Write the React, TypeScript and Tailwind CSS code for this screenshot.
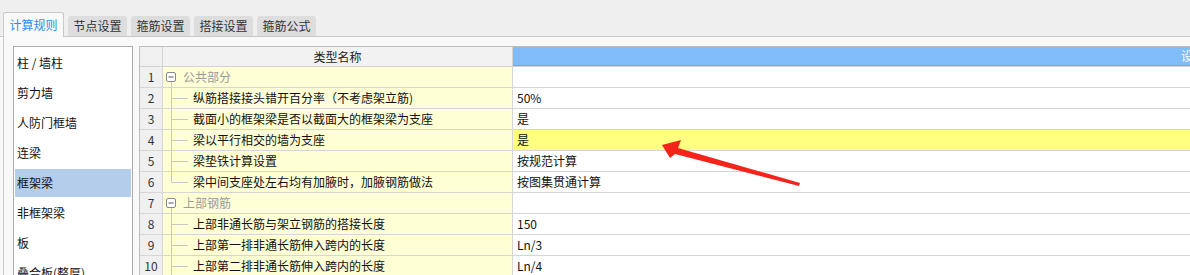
import React from "react";

type Row = {
  no: number;
  name: string;
  value?: string;
  group?: boolean;
  last?: boolean;
  hl?: boolean;
};

const rows: Row[] = [
  { no: 1, name: "公共部分", group: true },
  { no: 2, name: "纵筋搭接接头错开百分率（不考虑架立筋)", value: "50%" },
  { no: 3, name: "截面小的框架梁是否以截面大的框架梁为支座", value: "是" },
  { no: 4, name: "梁以平行相交的墙为支座", value: "是", hl: true },
  { no: 5, name: "梁垫铁计算设置", value: "按规范计算" },
  { no: 6, name: "梁中间支座处左右均有加腋时，加腋钢筋做法", value: "按图集贯通计算", last: true },
  { no: 7, name: "上部钢筋", group: true },
  { no: 8, name: "上部非通长筋与架立钢筋的搭接长度", value: "150" },
  { no: 9, name: "上部第一排非通长筋伸入跨内的长度", value: "Ln/3" },
  { no: 10, name: "上部第二排非通长筋伸入跨内的长度", value: "Ln/4" },
];

const tabs = ["节点设置", "箍筋设置", "搭接设置", "箍筋公式"];
const items = ["柱 / 墙柱", "剪力墙", "人防门框墙", "连梁", "框架梁", "非框架梁", "板", "叠合板(整厚)"];

function TreeMark({ row }: { row: Row }) {
  if (row.group) {
    return (
      <svg width="20" height="20" className="shrink-0">
        <rect x="3.5" y="5.5" width="9" height="9" rx="1.5" fill="white" stroke="#8a8a8a" />
        <line x1="5.5" y1="10" x2="10.5" y2="10" stroke="#555" />
        <line x1="8.5" y1="15" x2="8.5" y2="20" stroke="#c8c8c8" />
      </svg>
    );
  }
  return (
    <svg width="30" height="20" className="shrink-0">
      <line x1="8.5" y1="0" x2="8.5" y2={row.last ? 10.5 : 20} stroke="#c8c8c8" />
      <line x1="8.5" y1="10.5" x2="25" y2="10.5" stroke="#c8c8c8" />
    </svg>
  );
}

export default function App() {
  return (
    <div className="relative h-[275px] w-[1190px] overflow-hidden bg-[#f9f9f9] font-['Noto_Sans_CJK_SC',sans-serif] text-[12px] text-[#111]">
      <div className="flex h-[37px] items-end gap-[4px] border-b border-[#c9c9c9] bg-[#efefef] pl-[3px]">
        <div className="mb-[-1px] flex h-[25px] w-[61px] items-center justify-center rounded-t-[3px] border border-b-0 border-[#c9c9c9] bg-[#f9f9f9] text-[#2f8cf0]">
          计算规则
        </div>
        {tabs.map((t) => (
          <div
            key={t}
            className="flex h-[20px] w-[59px] items-center justify-center rounded-t-[3px] bg-[#dddddd] text-[#333]"
          >
            {t}
          </div>
        ))}
      </div>

      <div className="ml-[3px] flex h-[238px] border-l border-[#c9c9c9] pl-[9px] pt-[9px]">
        <div className="h-[260px] w-[120px] shrink-0 border border-[#ababab] bg-white px-px pt-px">
          {items.map((it, i) => (
            <div key={it} className="h-[30px] py-px">
              <div
                className={`flex h-[28px] items-center pl-[2px] leading-none ${
                  i === 4 ? "bg-[#b3cdea]" : ""
                }`}
              >
                {it}
              </div>
            </div>
          ))}
        </div>

        <div className="ml-[6px] min-w-0 flex-1 overflow-hidden border-l border-t border-[#bdbdbd] bg-white">
          <div className="flex h-[20px] border-b border-[#d3d3d3]">
            <div className="w-[23px] shrink-0 border-r border-[#d3d3d3] bg-[#f0f0f0]" />
            <div className="flex w-[350px] shrink-0 items-center justify-center border-r border-[#d3d3d3] bg-[#f2f2f2] leading-none text-[#222]">
              类型名称
            </div>
            <div className="flex w-[1372px] shrink-0 items-center justify-center border-b border-[#6aa9ea] bg-[#80bdf8] leading-none text-white">
              设置值
            </div>
          </div>

          {rows.map((r) => (
            <div key={r.no} className="flex h-[21px] border-b border-[#d6d6d6]">
              <div className="flex w-[23px] shrink-0 items-center justify-center border-r border-[#d6d6d6] bg-[#f0f0f0] leading-none text-[#333]">
                {r.no}
              </div>
              <div className="flex w-[350px] shrink-0 items-center border-r border-[#d6d6d6] bg-[#ffffd6] leading-none">
                <TreeMark row={r} />
                <span className={r.group ? "text-[#9a9a9a]" : "text-[#111]"}>{r.name}</span>
              </div>
              <div
                className={`flex w-[1372px] shrink-0 items-center pl-[4px] leading-none ${
                  r.hl ? "bg-[#ffff80]" : "bg-white"
                }`}
              >
                {r.value}
              </div>
            </div>
          ))}
        </div>
      </div>

      <svg className="pointer-events-none absolute left-0 top-0" width="1190" height="275">
        <polygon
          points="662,145 681,140 678,148 800,183 799,186 675,154 670,158"
          fill="#f5241a"
        />
      </svg>
    </div>
  );
}
